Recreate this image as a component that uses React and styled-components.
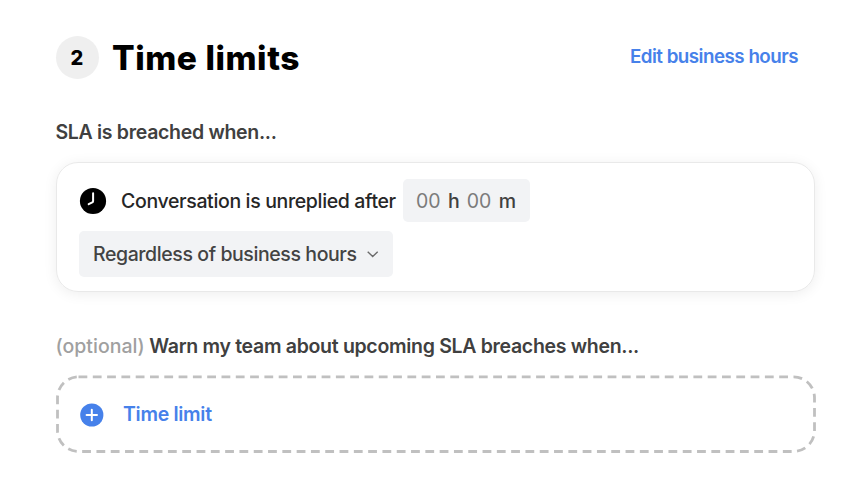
import React from "react";
import styled, { createGlobalStyle } from "styled-components";

const GlobalStyle = createGlobalStyle`
  * {
    box-sizing: border-box;
  }
  body {
    margin: 0;
    background: #fff;
    color: #404040;
    font-family: Inter, "Liberation Sans", sans-serif;
    font-size: 19.5px;
    font-weight: 500;
    -webkit-font-smoothing: antialiased;
  }
  h2, p {
    margin: 0;
  }
  button {
    border: 0;
    background: none;
    padding: 0;
    font: inherit;
  }
`;

const Section = styled.section`
  width: 860px;
  height: 493px;
  padding: 36px 44px 0 56px;
  overflow: hidden;
`;

const Header = styled.header`
  display: flex;
  align-items: center;
  height: 43px;
  padding-right: 18px;
`;

const StepNumber = styled.span`
  display: flex;
  align-items: center;
  justify-content: center;
  width: 43px;
  height: 43px;
  padding-right: 1px;
  border-radius: 50%;
  background: #efefef;
  color: #000;
  font-size: 20px;
  font-weight: 800;
`;

const Title = styled.h2`
  margin-left: 13px;
  padding-top: 1px;
  color: #000;
  font-size: 33.5px;
  font-weight: 800;
  line-height: 40px;
  letter-spacing: 0.55px;
  white-space: nowrap;
`;

const TextButton = styled.button`
  color: #4681ea;
  font-size: ${({ $size }) => $size};
  font-weight: 600;
  line-height: 24px;
  letter-spacing: ${({ $tracking }) => $tracking};
  white-space: nowrap;
`;

const EditButton = styled(TextButton)`
  margin-left: auto;
  padding-bottom: 2px;
`;

const AddButton = styled(TextButton)`
  padding-bottom: 2px;
`;

const Label = styled.p`
  margin-top: ${({ $top }) => $top};
  font-weight: 600;
  line-height: 24px;
  letter-spacing: -0.31px;
  text-indent: -0.5px;
  white-space: nowrap;
`;

const Muted = styled.span`
  color: #a0a0a0;
  font-weight: 500;
  letter-spacing: 0;
`;

const Card = styled.div`
  width: 759px;
  height: 130px;
  margin-top: 18px;
  padding: 16px 22px;
  border: 1px solid #e9e9e9;
  border-radius: 22px;
  box-shadow: 0 2px 14px rgba(0, 0, 0, 0.07);
`;

const Row = styled.div`
  display: flex;
  align-items: center;
`;

const Condition = styled.span`
  width: 274px;
  margin: 0 8px 0 14px;
  color: #262626;
  letter-spacing: -0.35px;
  white-space: nowrap;
`;

const Duration = styled.div`
  display: flex;
  align-items: center;
  gap: 7px;
  width: 127px;
  height: 43px;
  padding-left: 13px;
  border-radius: 5px;
  background: #f2f3f5;
`;

const Digits = styled.span`
  width: 25px;
  color: #7b7b7b;
  font-weight: 400;
`;

const Select = styled.button`
  display: flex;
  align-items: center;
  justify-content: space-between;
  width: 314px;
  height: 46px;
  margin-top: 9px;
  padding: 0 14px;
  border-radius: 5px;
  background: #f2f3f5;
  color: #434343;
  letter-spacing: -0.41px;
  white-space: nowrap;
`;

const AddCard = styled.div`
  position: relative;
  display: flex;
  align-items: center;
  gap: 19px;
  width: 760px;
  height: 78px;
  margin-top: 17px;
  padding: 1px 0 0 24px;
  border-radius: 22px;
`;

const DashedOutline = styled.svg`
  position: absolute;
  inset: 0;
  pointer-events: none;
`;

const ClockIcon = () => (
  <svg width="28" height="28" viewBox="0 0 28 28" fill="none">
    <circle cx="14" cy="14" r="13.1" fill="#000" />
    <path
      d="M14.1 6.2v7.7c0 .7-.2 1.1-.8 1.4l-3.6 1.9"
      stroke="#fff"
      strokeWidth="2"
      strokeLinecap="round"
    />
  </svg>
);

const ChevronIcon = () => (
  <svg width="12" height="8" viewBox="0 0 12 8" fill="none">
    <path d="M.7 1.7 5.7 6.5l5-4.8" stroke="#6b6b6b" strokeWidth="1.4" />
  </svg>
);

const PlusIcon = () => (
  <svg width="24" height="24" viewBox="0 0 24 24" fill="none">
    <circle cx="11.8" cy="12" r="11.6" fill="#4681ea" />
    <path
      d="M11.8 6.8v10.4M6.6 12H17"
      stroke="#fff"
      strokeWidth="2"
      strokeLinecap="round"
    />
  </svg>
);

const App = () => (
  <>
    <GlobalStyle />
    <Section>
      <Header>
        <StepNumber>2</StepNumber>
        <Title>Time limits</Title>
        <EditButton $size="18.8px" $tracking="-0.52px">
          Edit business hours
        </EditButton>
      </Header>

      <Label $top="41px">SLA is breached when...</Label>
      <Card>
        <Row>
          <ClockIcon />
          <Condition>Conversation is unreplied after</Condition>
          <Duration>
            <Digits>00</Digits>h<Digits>00</Digits>m
          </Duration>
        </Row>
        <Select>
          Regardless of business hours
          <ChevronIcon />
        </Select>
      </Card>

      <Label $top="42px">
        <Muted>(optional)</Muted> Warn my team about upcoming SLA breaches
        when...
      </Label>
      <AddCard>
        {/* wider dashes than the native dashed border */}
        <DashedOutline width="760" height="78" fill="none">
          <rect
            x="1.5"
            y="1.8"
            width="757"
            height="74.7"
            rx="21"
            stroke="#c0c0c0"
            strokeWidth="2.8"
            strokeDasharray="8.8 5.5"
          />
        </DashedOutline>
        <PlusIcon />
        <AddButton $size="19.5px" $tracking="-0.3px">
          Time limit
        </AddButton>
      </AddCard>
    </Section>
  </>
);

export default App;
